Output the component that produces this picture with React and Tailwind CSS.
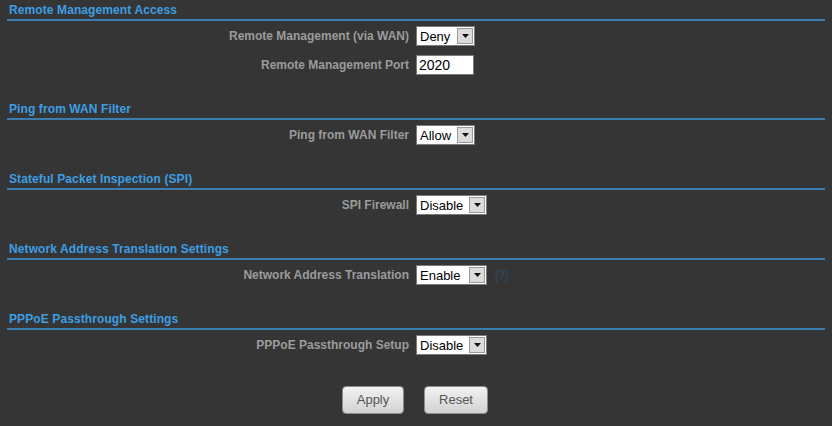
import React from 'react';

const Header = ({ title }) => (
    <div className="mx-[7px] border-b-2 border-[#3a7dae] pl-[2px] pt-[2px] text-[12px] font-bold leading-[17px] tracking-[0.1px] text-[#3e9ee2]">
        {title}
    </div>
);

const Select = ({ value, width }) => (
    <div className={`flex h-[20px] ${width} items-center border border-[#7a7a7a] bg-white`}>
        <span className="flex-1 pl-[3px] text-[13px] leading-none text-black">{value}</span>
        <span className="mr-[1px] flex h-[16px] w-[16px] items-center justify-center border border-[#9a9a9a] bg-[#dcdcdc]">
            <svg width="7" height="4" viewBox="0 0 7 4">
                <path d="M0 0h7L3.5 4z" fill="#111" />
            </svg>
        </span>
    </div>
);

const Row = ({ label, children }) => (
    <div className="flex h-[20px] items-center">
        <div className="w-[409px] text-right text-[12px] font-bold text-[#9b9b9b]">{label}</div>
        <div className="ml-[7px] flex items-center">{children}</div>
    </div>
);

const Section = ({ title, children, first }) => (
    <div className={first ? '' : 'mt-[24px]'}>
        <Header title={title} />
        <div className="mt-[5px] flex flex-col gap-[9px]">{children}</div>
    </div>
);

const Button = ({ label, width }) => (
    <button
        className={`h-[28px] ${width} rounded-[4px] border border-[#8d8d8d] bg-gradient-to-b from-[#f2f2f2] to-[#d2d2d2] text-[13px] text-[#555]`}
    >
        {label}
    </button>
);

export default function App() {
    return (
        <div
            className="h-[426px] w-[832px] overflow-hidden bg-[#353535]"
            style={{ fontFamily: '"Liberation Sans", Arial, sans-serif' }}
        >
            <Section title="Remote Management Access" first>
                <Row label="Remote Management (via WAN)">
                    <Select value="Deny" width="w-[59px]" />
                </Row>
                <Row label="Remote Management Port">
                    <div className="flex h-[20px] w-[58px] items-center border border-[#7a7a7a] bg-white pl-[2px] text-[14px] text-black">
                        2020
                    </div>
                </Row>
            </Section>

            <Section title="Ping from WAN Filter">
                <Row label="Ping from WAN Filter">
                    <Select value="Allow" width="w-[59px]" />
                </Row>
            </Section>

            <Section title="Stateful Packet Inspection (SPI)">
                <Row label="SPI Firewall">
                    <Select value="Disable" width="w-[71px]" />
                </Row>
            </Section>

            <Section title="Network Address Translation Settings">
                <Row label="Network Address Translation">
                    <Select value="Enable" width="w-[71px]" />
                    <span className="ml-[8px] text-[12px] text-[#2c4c6c]">[?]</span>
                </Row>
            </Section>

            <Section title="PPPoE Passthrough Settings">
                <Row label="PPPoE Passthrough Setup">
                    <Select value="Disable" width="w-[71px]" />
                </Row>
            </Section>

            <div className="mt-[31px] flex justify-center gap-[20px] pr-[2px]">
                <Button label="Apply" width="w-[62px]" />
                <Button label="Reset" width="w-[64px]" />
            </div>
        </div>
    );
}
